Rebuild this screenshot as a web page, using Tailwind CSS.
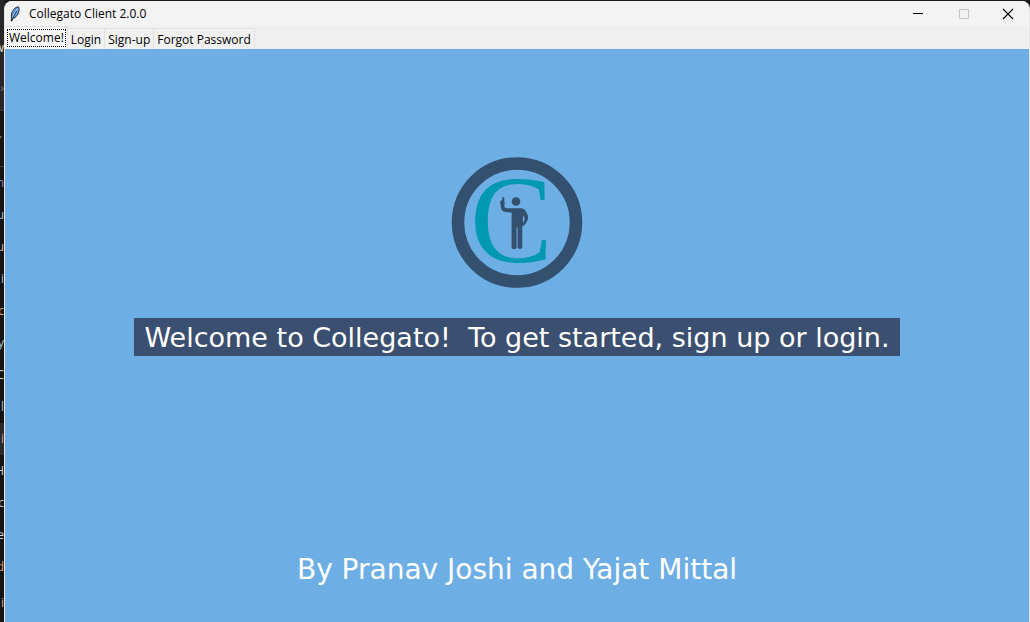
<!DOCTYPE html>
<html lang="en">
<head>
<meta charset="utf-8">
<title>Collegato Client 2.0.0</title>
<script src="https://cdn.jsdelivr.net/npm/@tailwindcss/browser@4"></script>
</head>
<body class="flex h-screen overflow-hidden bg-[#1b1a19] font-['Open_Sans',sans-serif] text-xs text-black">
  <!-- Edge of the editor behind the window -->
  <div aria-hidden="true" class="flex w-1 shrink-0 flex-col overflow-hidden bg-[#161514] text-xs leading-8">
    <div class="flex h-[111px] shrink-0 flex-col items-end border-b border-[#3a3a3a] bg-[#282828] pt-8 text-[#e0e0e0]"><span>w</span><span class="mt-2 text-[#777777]">›</span></div>
    <div class="flex h-14 shrink-0 flex-col items-end border-b border-[#3a3a3a] pt-2 text-[#999999]"><span>⌄</span></div>
    <div class="flex flex-col items-end text-[#a9c3cf]">
      <span class="text-[#8f86c0]">n</span><span>u</span><span class="text-[#c9b7a4]">u</span><span>i</span><span class="text-[#d0a67c]">c</span><span>y</span><span class="text-[#d8d0b8]">C</span><span>l</span><span class="w-1 bg-[#2b2a29] text-right text-[#d0a0a0]">i</span><span class="text-[#c8d8d0]">H</span><span>c</span><span class="text-[#d0d0d0]">e</span><span class="text-[#d09a70]">d</span><span class="mt-1 text-[#d0b090]">i</span>
    </div>
  </div>

  <div class="flex min-w-0 flex-1 flex-col pt-px">
    <div class="flex min-h-0 flex-1 flex-col overflow-hidden rounded-t-lg border-x border-[#e4e4e4] bg-[#efefef]">
      <header class="flex h-[25px] shrink-0 items-center bg-[#f3f3f3]">
        <svg class="ml-1 h-4 w-3 shrink-0" viewBox="0 0 12 16" aria-hidden="true">
          <path d="M9.500 .8C6 1.200 3.200 4.500 2.500 8c-.3 1.800-.3 3 .2 4.200L2 15l1-.3.700-2.200C7 12 9.500 8 10 4.500c.2-1.500.2-2.800-.5-3.700z" fill="#5b9ce6" stroke="#1b1b1f" stroke-width=".9"/>
          <path d="M8.500 2.500 5 8l-1.600 4.500" fill="none" stroke="#b9dcff" stroke-width="1"/>
          <path d="M7.500 5 4.500 10.500 2.500 15" fill="none" stroke="#1b1b1f" stroke-width=".8"/>
        </svg>
        <h1 class="ml-2 flex-1 whitespace-nowrap">Collegato Client 2.0.0</h1>
        <div class="flex h-full">
          <button aria-label="Minimize" class="flex w-[46px] items-center justify-center">
            <svg class="size-3" viewBox="0 0 12 12" shape-rendering="crispEdges"><path d="M1 5.500h10" stroke="#000" fill="none"/></svg>
          </button>
          <button aria-label="Maximize" disabled class="flex w-[46px] items-center justify-center">
            <svg class="size-3" viewBox="0 0 12 12"><rect x="1.500" y="1.500" width="9" height="9" stroke="#c4c4c4" fill="none"/></svg>
          </button>
          <button aria-label="Close" class="flex w-[42px] items-center justify-center">
            <svg class="size-3" viewBox="0 0 12 12"><path d="M1 1l10 10M11 1 1 11" stroke="#000" stroke-width="1.100" fill="none"/></svg>
          </button>
        </div>
      </header>

      <div role="tablist" class="flex h-[23px] shrink-0 items-end whitespace-nowrap leading-4">
        <button role="tab" aria-selected="true" class="h-full border-t border-r border-[#dfdfdf] bg-[#f9f9f9] pt-px pr-px pb-0.5 pl-0.5"><span class="block border border-dotted border-black px-px">Welcome!</span></button>
        <button role="tab" class="h-[21px] border-t border-r border-[#e2e2e2] bg-[#f1f1f1] px-[3px] pt-px">Login</button>
        <button role="tab" class="h-[21px] border-t border-r border-[#e2e2e2] bg-[#f1f1f1] px-[3px] pt-px">Sign-up</button>
        <button role="tab" class="h-[21px] border-t border-r border-[#e2e2e2] bg-[#f1f1f1] px-[3px] pt-px">Forgot Password</button>
      </div>

      <main class="flex flex-1 flex-col items-center bg-[#6daee5] pt-[107px] pb-8 font-['DejaVu_Sans',Verdana,sans-serif] leading-9 text-white">
        <svg class="size-[134px] shrink-0" viewBox="0 0 134 134" role="img" aria-label="Collegato logo">
          <circle cx="67" cy="66.500" r="59" fill="none" stroke="#34506f" stroke-width="12.500"/>
          <text x="20" y="106" font-family="Liberation Serif, serif" font-size="124" fill="#0098b3">C</text>
          <g fill="#34506f">
            <circle cx="66" cy="45.500" r="4.300"/>
            <path d="M50.300 47.500c-.5-2 .5-3 1.500-3l1-3.500c1 0 1.500.5 1.500 1.500v3l.5 1-.5 4c.5 1.200 1.500 1.700 3 1.700h13.500c3.500 0 5 2.500 6.500 6 1.500 3 1 4.500-.5 7.500-1 2-2.500 3.500-4.500 4.500v20.500c0 3-4.700 3-4.700 0V71.500h-1V91c0 3-5 3-5 0V56.500c-4 0-7.500-.3-9.300-2-1.500-1.500-1.500-4-2-7zM73 59v8c2-2.500 2.200-4.500 0-8z" fill-rule="evenodd"/>
          </g>
        </svg>
        <p class="mt-7 bg-[#3b4f70] px-2.5 pt-0.5 text-[27px] leading-9 whitespace-pre">Welcome to Collegato!  To get started, sign up or login.</p>
        <p class="mt-auto pb-0.5 text-[28px] leading-9 whitespace-nowrap">By Pranav Joshi and Yajat Mittal</p>
      </main>
    </div>
  </div>
</body>
</html>
